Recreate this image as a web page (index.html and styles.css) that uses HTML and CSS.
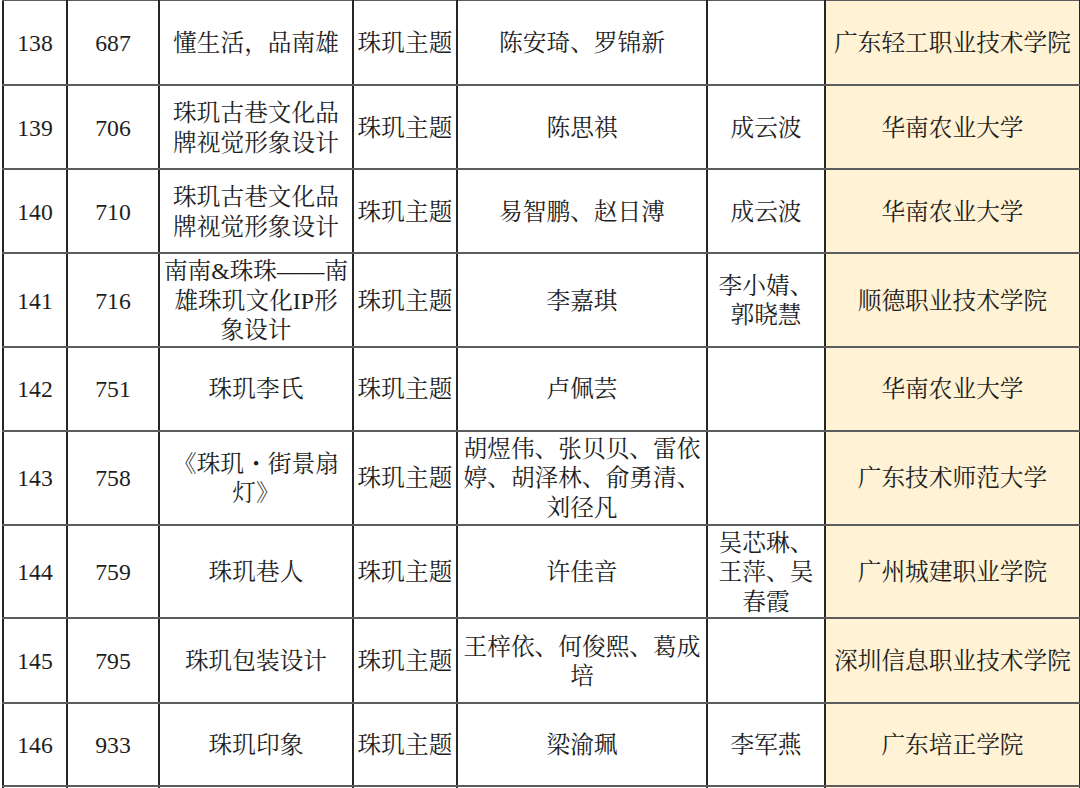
FILE: index.html
```html
<!DOCTYPE html>
<html lang="zh-CN">
<head>
<meta charset="utf-8">
<title>名单</title>
<link rel="stylesheet" href="styles.css">
</head>
<body>
<div class="wrap">
<table class="list">
<colgroup>
<col class="c1"><col class="c2"><col class="c3"><col class="c4"><col class="c5"><col class="c6"><col class="c7">
</colgroup>
<tbody>
<tr class="h85"><td>138</td><td>687</td><td>懂生活，品南雄</td><td>珠玑主题</td><td>陈安琦、罗锦新</td><td></td><td class="school">广东轻工职业技术学院</td></tr>
<tr class="h84"><td>139</td><td>706</td><td>珠玑古巷文化品<br>牌视觉形象设计</td><td>珠玑主题</td><td>陈思祺</td><td>成云波</td><td class="school">华南农业大学</td></tr>
<tr class="h84"><td>140</td><td>710</td><td>珠玑古巷文化品<br>牌视觉形象设计</td><td>珠玑主题</td><td>易智鹏、赵日溥</td><td>成云波</td><td class="school">华南农业大学</td></tr>
<tr class="h93"><td>141</td><td>716</td><td>南南&amp;珠珠——南<br>雄珠玑文化IP形<br>象设计</td><td>珠玑主题</td><td>李嘉琪</td><td>李小婧、<br>郭晓慧</td><td class="school">顺德职业技术学院</td></tr>
<tr class="h84"><td>142</td><td>751</td><td>珠玑李氏</td><td>珠玑主题</td><td>卢佩芸</td><td></td><td class="school">华南农业大学</td></tr>
<tr class="h94"><td>143</td><td>758</td><td>《珠玑・街景扇<br>灯》</td><td>珠玑主题</td><td>胡煜伟、张贝贝、雷依<br>婷、胡泽林、俞勇清、<br>刘径凡</td><td></td><td class="school">广东技术师范大学</td></tr>
<tr class="h93"><td>144</td><td>759</td><td>珠玑巷人</td><td>珠玑主题</td><td>许佳音</td><td>吴芯琳、<br>王萍、吴<br>春霞</td><td class="school">广州城建职业学院</td></tr>
<tr class="h85"><td>145</td><td>795</td><td>珠玑包装设计</td><td>珠玑主题</td><td>王梓依、何俊熙、葛成<br>培</td><td></td><td class="school">深圳信息职业技术学院</td></tr>
<tr class="h83"><td>146</td><td>933</td><td>珠玑印象</td><td>珠玑主题</td><td>梁渝珮</td><td>李军燕</td><td class="school">广东培正学院</td></tr>
<tr class="h20"><td></td><td></td><td></td><td></td><td></td><td></td><td class="school"></td></tr>
</tbody>
</table>
</div>
</body>
</html>
```

FILE: styles.css
```css
html, body {
  margin: 0;
  padding: 0;
  background: #ffffff;
}
.wrap {
  margin: -1px 0 0 2px;
}
.list {
  border-collapse: collapse;
  table-layout: fixed;
  width: 1077px;
  font-family: "Liberation Serif", "Noto Serif CJK SC", "Noto Sans CJK SC", serif;
  font-size: 23.7px;
  color: #1e1e1e;
}
.c1 { width: 64px; }
.c2 { width: 92px; }
.c3 { width: 194px; }
.c4 { width: 104px; }
.c5 { width: 250px; }
.c6 { width: 118px; }
.c7 { width: 255px; }
.list td {
  border-left: 2px solid #262626;
  border-right: 2px solid #262626;
  border-top: 2px solid #5c5c5c;
  border-bottom: 2px solid #5c5c5c;
  text-align: center;
  vertical-align: middle;
  padding: 3px 3px 0;
  line-height: 29.5px;
  white-space: nowrap;
  overflow: hidden;
}
.list td.school {
  background: #fff2d5;
}
.h85 { height: 85px; }
.h84 { height: 84px; }
.h93 { height: 93px; }
.h94 { height: 94px; }
.h83 { height: 83px; }
.h20 { height: 20px; }
```
